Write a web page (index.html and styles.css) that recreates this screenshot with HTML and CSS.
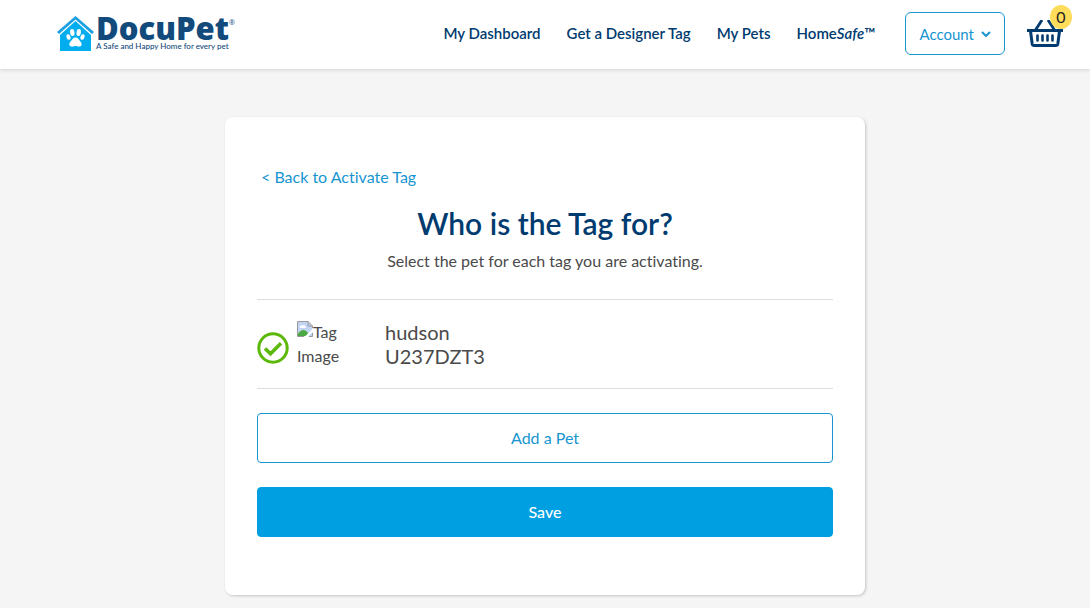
FILE: index.html
```html
<!DOCTYPE html>
<html lang="en">
<head>
    <meta charset="UTF-8">
    <meta name="viewport" content="width=device-width, initial-scale=1.0">
    <title>Activate Tag - DocuPet</title>
    <link rel="stylesheet" href="styles.css">
</head>
<body>
    <header class="site-header">
        <a class="logo" href="/">
            <svg class="logo-mark" viewBox="0 0 37 36" aria-hidden="true">
                <path d="M0 16 18.500 0 37 16 35 18 18.500 3.500 2 18z" fill="#1c9fe0"/>
                <path d="M18.500 5 34 19V35H3V19z" fill="#00aeef"/>
                <g fill="#fff">
                    <ellipse cx="15.300" cy="16.500" rx="2.200" ry="3.500" transform="rotate(-8 15.300 16.500)"/>
                    <ellipse cx="21.700" cy="16.500" rx="2.200" ry="3.500" transform="rotate(8 21.700 16.500)"/>
                    <ellipse cx="11.500" cy="21" rx="1.900" ry="2.900" transform="rotate(-20 11.500 21)"/>
                    <ellipse cx="25.500" cy="21" rx="1.900" ry="2.900" transform="rotate(20 25.500 21)"/>
                    <path d="M18.500 21.500c2.600 0 3.200 2.200 4.700 3.700s2.600 4.600-.700 5.400c-1.500.400-2.500-.600-4-.600s-2.500 1-4 .600c-3.300-.800-2.200-3.900-.700-5.400s2.100-3.700 4.700-3.700z"/>
                </g>
            </svg>
            <span class="logo-text">
                <span class="logo-name">DocuPet<sup>®</sup></span>
                <span class="logo-tagline">A Safe and Happy Home for every pet</span>
            </span>
        </a>
        <nav class="main-nav">
            <a href="/dashboard">My Dashboard</a>
            <a href="/designer-tags">Get a Designer Tag</a>
            <a href="/pets">My Pets</a>
            <a href="/homesafe">Home<em>Safe</em>™</a>
        </nav>
        <button type="button" class="account-btn">
            Account
            <svg width="10" height="6" viewBox="0 0 10 6" aria-hidden="true">
                <path d="M1 1l4 4 4-4" fill="none" stroke="currentColor" stroke-width="2"/>
            </svg>
        </button>
        <a class="cart" href="/cart" aria-label="Cart">
            <svg width="36" height="28" viewBox="0 0 36 28" fill="none" stroke="#003b70" aria-hidden="true">
                <path d="M8.500 10 15 0M27.500 10 21 0" stroke-width="2.800"/>
                <path d="M0 10.500H36" stroke-width="3"/>
                <path d="M3.500 11 5.200 24q.300 1.500 2 1.500H28.800q1.700 0 2-1.500L32.500 11" stroke-width="3"/>
                <path d="M10.500 15.500v5M15.500 15.500v5M20.500 15.500v5M25.500 15.500v5" stroke-width="2.600" stroke-linecap="round"/>
            </svg>
            <span class="cart-count">0</span>
        </a>
    </header>

    <main class="card">
        <a class="back-link" href="/activate">&lt; Back to Activate Tag</a>
        <h1>Who is the Tag for?</h1>
        <p class="intro">Select the pet for each tag you are activating.</p>

        <div class="pet-row">
            <svg class="check" width="32" height="32" viewBox="0 0 32 32" fill="none" stroke="#5cb80b" aria-hidden="true">
                <circle cx="16" cy="16" r="14.200" stroke-width="3"/>
                <path d="M8 16.500l5.500 5.300L24 11.300" stroke-width="3.600"/>
            </svg>
            <div class="tag-image">
                <svg width="16" height="16" viewBox="0 0 16 16" aria-hidden="true">
                    <path d="M.500.500H11l4.500 4.500V15.500H.500z" fill="#c3d5f5"/>
                    <path d="M3 7c-1-2 1-3 2-2 1-2 4-1 3.500 1 1 .300.500 1 0 1z" fill="#fff"/>
                    <path d="M1 15V13C4 8 8 8 11 12v3z" fill="#4ca843"/>
                    <path d="M16 7.500 7.500 16h3L16 10.500z" fill="#fff"/>
                    <path d="M15.500 7V5L11 .500H.500V15.500H7M11 .500V5h4.500M12 15.500h3.500V12" fill="none" stroke="#9a9a9a"/>
                </svg>Tag Image
            </div>
            <div class="pet-info">
                <div>hudson</div>
                <div>U237DZT3</div>
            </div>
        </div>

        <button type="button" class="btn btn-outline">Add a Pet</button>
        <button type="button" class="btn btn-primary">Save</button>
    </main>
</body>
</html>
```

FILE: styles.css
```css
* {
    box-sizing: border-box;
}
body {
    margin: 0;
    font-family: Lato, sans-serif;
    font-size: 16px;
    font-variant-ligatures: none;
    line-height: 24px;
    color: #4a4a4a;
    background-color: #f5f5f5;
}
a {
    color: #1795d0;
    text-decoration: none;
}
button {
    font-family: inherit;
    cursor: pointer;
}

/* Header */
.site-header {
    display: flex;
    align-items: center;
    padding: 12px 27px 14px 57px;
    background: #fff;
    box-shadow: 0 1px 4px rgba(0, 0, 0, 0.14);
}
.logo {
    display: flex;
    gap: 2px;
    color: #134a7c;
}
.logo-mark {
    width: 37px;
    height: 36px;
}
.logo-text {
    display: flex;
    flex-direction: column;
}
.logo-name {
    font-family: "Open Sans", sans-serif;
    font-size: 31px;
    font-weight: 800;
    line-height: 24px;
}
.logo-name sup {
    font-size: 7px;
    font-weight: 400;
    line-height: 7px;
    vertical-align: 15px;
}
.logo-tagline {
    font-size: 8px;
    font-weight: 500;
    line-height: 12px;
}
.main-nav {
    display: flex;
    gap: 26px;
    margin-left: auto;
    padding-bottom: 2px;
}
.main-nav a {
    color: #003b70;
    font-size: 15px;
    font-weight: 600;
}
.account-btn {
    display: flex;
    align-items: center;
    gap: 7px;
    height: 43px;
    margin-left: 30px;
    padding: 0 13px;
    border: 1px solid #1795d0;
    border-radius: 6px;
    background: #fff;
    color: #1795d0;
    font-size: 15px;
}
.cart {
    position: relative;
    margin-left: 22px;
}
.cart svg {
    display: block;
}
.cart-count {
    position: absolute;
    top: -15px;
    right: -9px;
    width: 22px;
    height: 24px;
    border-radius: 50%;
    background: #ffdc5a;
    color: #222;
    font-size: 16px;
    line-height: 24px;
    text-align: center;
}

/* Card */
.card {
    max-width: 640px;
    margin: 48px auto 13px;
    padding: 48px 32px 58px;
    border-radius: 8px;
    background: #fff;
    box-shadow: 1px 1px 3px rgba(0, 0, 0, 0.2);
}
.back-link {
    display: inline-block;
    padding: 0 4px;
}
h1 {
    margin: 16px 0 8px;
    color: #003b70;
    font-size: 30px;
    font-weight: 600;
    line-height: 36px;
    text-align: center;
}
.intro {
    margin: 0 0 26px;
    text-align: center;
}
.pet-row {
    display: flex;
    align-items: center;
    padding: 20px 0;
    border-top: 1px solid #ddd;
    border-bottom: 1px solid #ddd;
}
.check {
    flex-shrink: 0;
    margin-top: 8px;
}
.tag-image {
    width: 64px;
    margin: 0 24px 0 8px;
}
.tag-image svg {
    vertical-align: 1px;
}
.pet-info {
    font-size: 20px;
}
.btn {
    display: block;
    width: 100%;
    height: 50px;
    margin-top: 24px;
    padding: 0 0 2px;
    border: 1px solid #1795d0;
    border-radius: 4px;
    font-size: 16px;
}
.btn-outline {
    background: #fff;
    color: #1795d0;
}
.btn-primary {
    border-color: #009fe1;
    background: #009fe1;
    color: #fff;
    font-weight: 500;
}
```
